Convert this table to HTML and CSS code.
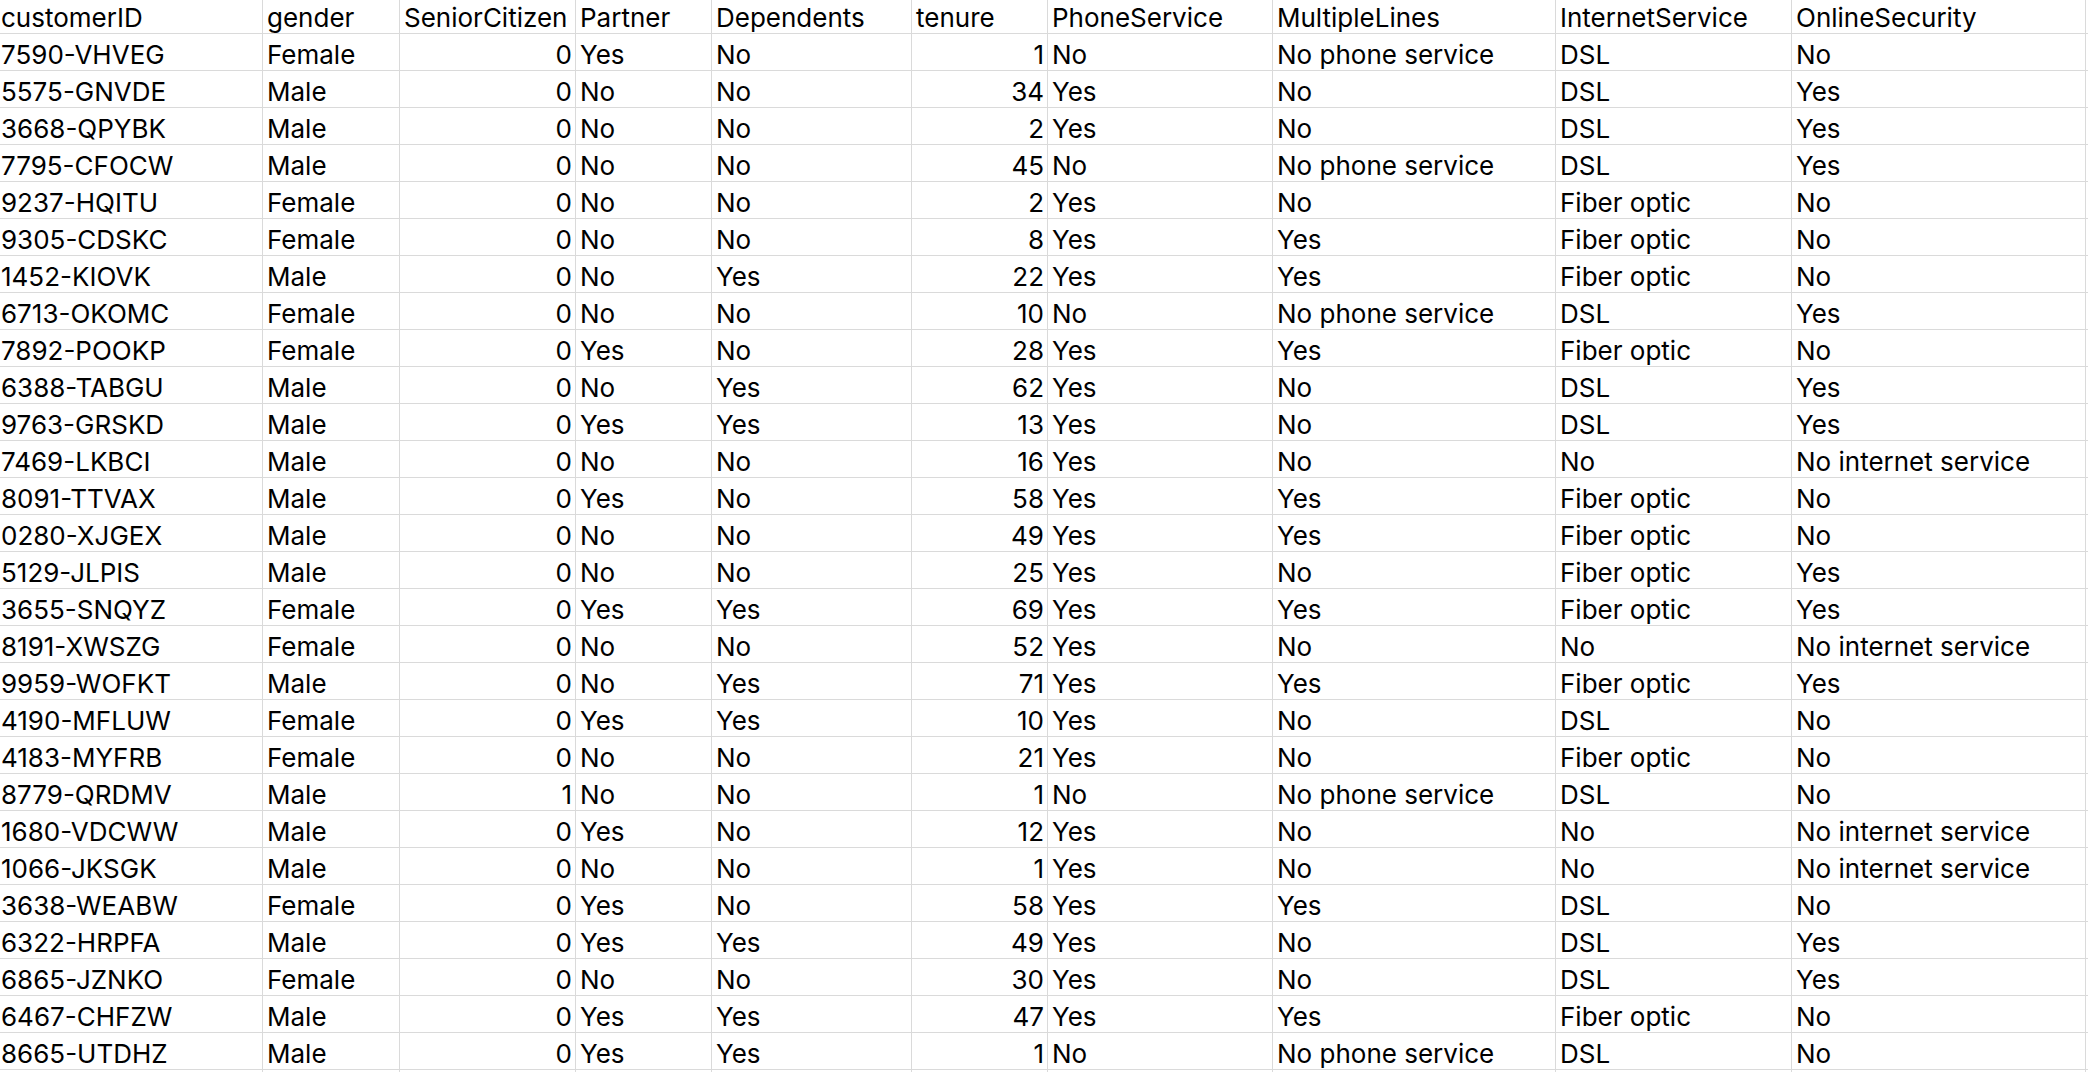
FILE: index.html
```html
<!DOCTYPE html>
<html>
<head>
<meta charset="utf-8">
<link rel="stylesheet" href="styles.css">
</head>
<body>
<div class="sheet">
<div class="c">customerID</div><div class="c">gender</div><div class="c">SeniorCitizen</div><div class="c">Partner</div><div class="c">Dependents</div><div class="c">tenure</div><div class="c">PhoneService</div><div class="c">MultipleLines</div><div class="c">InternetService</div><div class="c">OnlineSecurity</div><div class="c"></div>
<div class="c">7590-VHVEG</div><div class="c">Female</div><div class="c n">0</div><div class="c">Yes</div><div class="c">No</div><div class="c n">1</div><div class="c">No</div><div class="c">No phone service</div><div class="c">DSL</div><div class="c">No</div><div class="c"></div>
<div class="c">5575-GNVDE</div><div class="c">Male</div><div class="c n">0</div><div class="c">No</div><div class="c">No</div><div class="c n">34</div><div class="c">Yes</div><div class="c">No</div><div class="c">DSL</div><div class="c">Yes</div><div class="c"></div>
<div class="c">3668-QPYBK</div><div class="c">Male</div><div class="c n">0</div><div class="c">No</div><div class="c">No</div><div class="c n">2</div><div class="c">Yes</div><div class="c">No</div><div class="c">DSL</div><div class="c">Yes</div><div class="c"></div>
<div class="c">7795-CFOCW</div><div class="c">Male</div><div class="c n">0</div><div class="c">No</div><div class="c">No</div><div class="c n">45</div><div class="c">No</div><div class="c">No phone service</div><div class="c">DSL</div><div class="c">Yes</div><div class="c"></div>
<div class="c">9237-HQITU</div><div class="c">Female</div><div class="c n">0</div><div class="c">No</div><div class="c">No</div><div class="c n">2</div><div class="c">Yes</div><div class="c">No</div><div class="c">Fiber optic</div><div class="c">No</div><div class="c"></div>
<div class="c">9305-CDSKC</div><div class="c">Female</div><div class="c n">0</div><div class="c">No</div><div class="c">No</div><div class="c n">8</div><div class="c">Yes</div><div class="c">Yes</div><div class="c">Fiber optic</div><div class="c">No</div><div class="c"></div>
<div class="c">1452-KIOVK</div><div class="c">Male</div><div class="c n">0</div><div class="c">No</div><div class="c">Yes</div><div class="c n">22</div><div class="c">Yes</div><div class="c">Yes</div><div class="c">Fiber optic</div><div class="c">No</div><div class="c"></div>
<div class="c">6713-OKOMC</div><div class="c">Female</div><div class="c n">0</div><div class="c">No</div><div class="c">No</div><div class="c n">10</div><div class="c">No</div><div class="c">No phone service</div><div class="c">DSL</div><div class="c">Yes</div><div class="c"></div>
<div class="c">7892-POOKP</div><div class="c">Female</div><div class="c n">0</div><div class="c">Yes</div><div class="c">No</div><div class="c n">28</div><div class="c">Yes</div><div class="c">Yes</div><div class="c">Fiber optic</div><div class="c">No</div><div class="c"></div>
<div class="c">6388-TABGU</div><div class="c">Male</div><div class="c n">0</div><div class="c">No</div><div class="c">Yes</div><div class="c n">62</div><div class="c">Yes</div><div class="c">No</div><div class="c">DSL</div><div class="c">Yes</div><div class="c"></div>
<div class="c">9763-GRSKD</div><div class="c">Male</div><div class="c n">0</div><div class="c">Yes</div><div class="c">Yes</div><div class="c n">13</div><div class="c">Yes</div><div class="c">No</div><div class="c">DSL</div><div class="c">Yes</div><div class="c"></div>
<div class="c">7469-LKBCI</div><div class="c">Male</div><div class="c n">0</div><div class="c">No</div><div class="c">No</div><div class="c n">16</div><div class="c">Yes</div><div class="c">No</div><div class="c">No</div><div class="c">No internet service</div><div class="c"></div>
<div class="c">8091-TTVAX</div><div class="c">Male</div><div class="c n">0</div><div class="c">Yes</div><div class="c">No</div><div class="c n">58</div><div class="c">Yes</div><div class="c">Yes</div><div class="c">Fiber optic</div><div class="c">No</div><div class="c"></div>
<div class="c">0280-XJGEX</div><div class="c">Male</div><div class="c n">0</div><div class="c">No</div><div class="c">No</div><div class="c n">49</div><div class="c">Yes</div><div class="c">Yes</div><div class="c">Fiber optic</div><div class="c">No</div><div class="c"></div>
<div class="c">5129-JLPIS</div><div class="c">Male</div><div class="c n">0</div><div class="c">No</div><div class="c">No</div><div class="c n">25</div><div class="c">Yes</div><div class="c">No</div><div class="c">Fiber optic</div><div class="c">Yes</div><div class="c"></div>
<div class="c">3655-SNQYZ</div><div class="c">Female</div><div class="c n">0</div><div class="c">Yes</div><div class="c">Yes</div><div class="c n">69</div><div class="c">Yes</div><div class="c">Yes</div><div class="c">Fiber optic</div><div class="c">Yes</div><div class="c"></div>
<div class="c">8191-XWSZG</div><div class="c">Female</div><div class="c n">0</div><div class="c">No</div><div class="c">No</div><div class="c n">52</div><div class="c">Yes</div><div class="c">No</div><div class="c">No</div><div class="c">No internet service</div><div class="c"></div>
<div class="c">9959-WOFKT</div><div class="c">Male</div><div class="c n">0</div><div class="c">No</div><div class="c">Yes</div><div class="c n">71</div><div class="c">Yes</div><div class="c">Yes</div><div class="c">Fiber optic</div><div class="c">Yes</div><div class="c"></div>
<div class="c">4190-MFLUW</div><div class="c">Female</div><div class="c n">0</div><div class="c">Yes</div><div class="c">Yes</div><div class="c n">10</div><div class="c">Yes</div><div class="c">No</div><div class="c">DSL</div><div class="c">No</div><div class="c"></div>
<div class="c">4183-MYFRB</div><div class="c">Female</div><div class="c n">0</div><div class="c">No</div><div class="c">No</div><div class="c n">21</div><div class="c">Yes</div><div class="c">No</div><div class="c">Fiber optic</div><div class="c">No</div><div class="c"></div>
<div class="c">8779-QRDMV</div><div class="c">Male</div><div class="c n">1</div><div class="c">No</div><div class="c">No</div><div class="c n">1</div><div class="c">No</div><div class="c">No phone service</div><div class="c">DSL</div><div class="c">No</div><div class="c"></div>
<div class="c">1680-VDCWW</div><div class="c">Male</div><div class="c n">0</div><div class="c">Yes</div><div class="c">No</div><div class="c n">12</div><div class="c">Yes</div><div class="c">No</div><div class="c">No</div><div class="c">No internet service</div><div class="c"></div>
<div class="c">1066-JKSGK</div><div class="c">Male</div><div class="c n">0</div><div class="c">No</div><div class="c">No</div><div class="c n">1</div><div class="c">Yes</div><div class="c">No</div><div class="c">No</div><div class="c">No internet service</div><div class="c"></div>
<div class="c">3638-WEABW</div><div class="c">Female</div><div class="c n">0</div><div class="c">Yes</div><div class="c">No</div><div class="c n">58</div><div class="c">Yes</div><div class="c">Yes</div><div class="c">DSL</div><div class="c">No</div><div class="c"></div>
<div class="c">6322-HRPFA</div><div class="c">Male</div><div class="c n">0</div><div class="c">Yes</div><div class="c">Yes</div><div class="c n">49</div><div class="c">Yes</div><div class="c">No</div><div class="c">DSL</div><div class="c">Yes</div><div class="c"></div>
<div class="c">6865-JZNKO</div><div class="c">Female</div><div class="c n">0</div><div class="c">No</div><div class="c">No</div><div class="c n">30</div><div class="c">Yes</div><div class="c">No</div><div class="c">DSL</div><div class="c">Yes</div><div class="c"></div>
<div class="c">6467-CHFZW</div><div class="c">Male</div><div class="c n">0</div><div class="c">Yes</div><div class="c">Yes</div><div class="c n">47</div><div class="c">Yes</div><div class="c">Yes</div><div class="c">Fiber optic</div><div class="c">No</div><div class="c"></div>
<div class="c">8665-UTDHZ</div><div class="c">Male</div><div class="c n">0</div><div class="c">Yes</div><div class="c">Yes</div><div class="c n">1</div><div class="c">No</div><div class="c">No phone service</div><div class="c">DSL</div><div class="c">No</div><div class="c"></div>
<div class="c"></div><div class="c"></div><div class="c"></div><div class="c"></div><div class="c"></div><div class="c"></div><div class="c"></div><div class="c"></div><div class="c"></div><div class="c"></div><div class="c"></div>
</div>
</body>
</html>
```
FILE: styles.css
```css
html, body {
  margin: 0;
  padding: 0;
  background: #ffffff;
  overflow: hidden;
  width: 2088px;
  height: 1072px;
}

.sheet {
  display: grid;
  grid-template-columns: 265px 136px 175px 135px 199px 135px 224px 282px 235px 293px 40px;
  grid-auto-rows: 36px;
  gap: 1px;
  background: #dadada;
  margin-top: -3px;
  margin-left: -3px;
  width: max-content;
  font-family: "Inter", "Noto Sans CJK SC", sans-serif;
  font-size: 26px;
  color: #000000;
}

.c {
  background: #ffffff;
  box-sizing: border-box;
  height: 36px;
  padding: 4px 3px 0 4px;
  line-height: 33px;
  white-space: nowrap;
  overflow: hidden;
}

.n {
  text-align: right;
}
```
